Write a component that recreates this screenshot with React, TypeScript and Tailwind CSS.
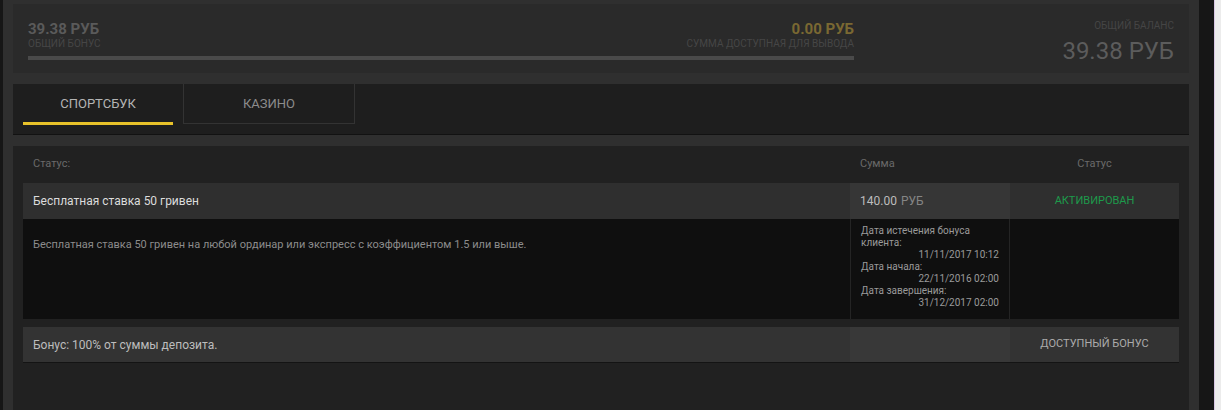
import React from 'react'

const font = { fontFamily: 'Roboto, "Liberation Sans", sans-serif' }

function TopPanel() {
  return (
    <div className="flex h-[69px] bg-[#2a2a2a] px-[15px] pt-[16px]">
      <div className="w-[826px]">
        <div className="flex items-start justify-between">
          <div>
            <div className="text-[15px] font-bold leading-[18px] text-[#5a5a5a]">39.38 РУБ</div>
            <div className="text-[10px] leading-[12px] uppercase text-[#464646]">Общий бонус</div>
          </div>
          <div className="text-right">
            <div className="text-[15px] font-bold leading-[18px] text-[#7a6832]">0.00 РУБ</div>
            <div className="text-[10px] leading-[12px] uppercase text-[#464646]">Сумма доступная для вывода</div>
          </div>
        </div>
        <div className="mt-[6px] h-[4px] bg-[#4a4a4a]" />
      </div>
      <div className="flex-1 text-right">
        <div className="text-[10px] leading-[12px] uppercase text-[#454545]">Общий баланс</div>
        <div className="mt-[3px] text-[24px] leading-[32px] text-[#5c5c5c]">39.38 РУБ</div>
      </div>
    </div>
  )
}

function Tabs() {
  return (
    <div className="flex h-[51px] border-b border-[#121212] bg-[#1e1e1e] px-[10px]">
      <div className="flex w-[150px] flex-col items-center">
        <div className="flex h-[38px] items-center pt-[2px] text-[13px] uppercase text-[#b4b4b4]">Спортсбук</div>
        <div className="h-[3px] w-full bg-[#e8c22a]" />
      </div>
      <div className="ml-[10px] flex h-[40px] w-[172px] items-center justify-center border border-t-0 border-[#333] text-[13px] uppercase text-[#8c8c8c]">
        Казино
      </div>
    </div>
  )
}

function DateLines() {
  const rows: [string, string][] = [
    ['Дата истечения бонуса клиента:', '11/11/2017 10:12'],
    ['Дата начала:', '22/11/2016 02:00'],
    ['Дата завершения:', '31/12/2017 02:00'],
  ]
  return (
    <div className="px-[10px] pt-[6px] text-[10px] leading-[12px] text-[#9a9a9a]">
      {rows.map(([label, value]) => (
        <div key={value}>
          <div className="w-[120px]">{label}</div>
          <div className="text-right">{value}</div>
        </div>
      ))}
    </div>
  )
}

function BonusTable() {
  return (
    <div className="h-[264px] bg-[#212121] px-[10px]">
      <div className="flex h-[37px] items-center text-[11px] text-[#6a6a6a]">
        <div className="flex-1 pl-[10px]">Статус:</div>
        <div className="w-[160px] pl-[10px]">Сумма</div>
        <div className="w-[169px] text-center">Статус</div>
      </div>

      <div className="flex h-[36px] items-center bg-[#2f2f2f]">
        <div className="flex-1 pl-[10px] text-[12px] text-[#dcdcdc]">Бесплатная ставка 50 гривен</div>
        <div className="flex h-full w-[160px] items-center bg-[#363636] pl-[10px] text-[12px]">
          <span className="text-[#bdbdbd]">140.00</span>
          <span className="ml-[4px] text-[#858585]">РУБ</span>
        </div>
        <div className="w-[169px] text-center text-[11px] uppercase text-[#1d9a4b]">Активирован</div>
      </div>

      <div className="flex h-[100px] bg-[#0f0f0f]">
        <div className="flex-1 pl-[10px] pt-[18px] text-[11px] text-[#8c8c8c]">
          Бесплатная ставка 50 гривен на любой ординар или экспресс с коэффициентом 1.5 или выше.
        </div>
        <div className="w-[160px] border-x border-[#242424]">
          <DateLines />
        </div>
        <div className="w-[169px]" />
      </div>

      <div className="mt-[8px] flex h-[36px] items-center border-b border-[#141414] bg-[#333]">
        <div className="flex-1 pl-[10px] text-[12px] text-[#bdbdbd]">Бонус: 100% от суммы депозита.</div>
        <div className="h-full w-[160px] bg-[#383838]" />
        <div className="w-[169px] text-center text-[11px] uppercase text-[#ababab]">Доступный бонус</div>
      </div>
    </div>
  )
}

export default function App() {
  return (
    <div className="flex h-[410px] w-[1221px] overflow-hidden bg-[#161616]" style={font}>
      <div className="ml-[3px] w-[1196px] bg-[#2f2f2f] px-[10px] pt-[4px]">
        <TopPanel />
        <div className="mt-[11px]">
          <Tabs />
        </div>
        <div className="mt-[11px]">
          <BonusTable />
        </div>
      </div>
      <div className="flex-1" />
      <div className="w-[7px] border-l border-[#d8c8e4] bg-[#ececec]" />
    </div>
  )
}
